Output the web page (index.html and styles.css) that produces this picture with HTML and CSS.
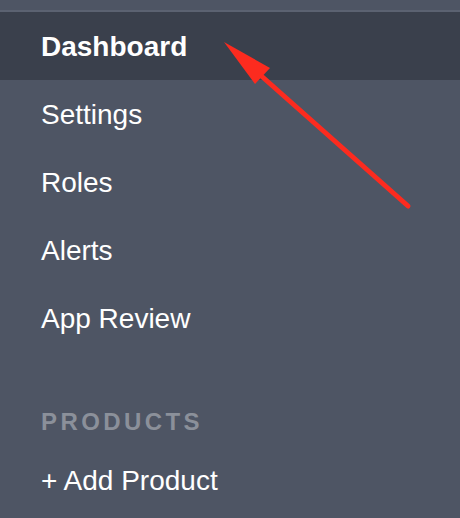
FILE: index.html
```html
<!DOCTYPE html>
<html>
<head>
<meta charset="utf-8">
<link rel="stylesheet" href="styles.css">
</head>
<body>
<nav class="sidebar">
  <div class="topbar"></div>
  <ul class="menu">
    <li class="item active">Dashboard</li>
    <li class="item">Settings</li>
    <li class="item">Roles</li>
    <li class="item">Alerts</li>
    <li class="item">App Review</li>
  </ul>
  <div class="section">PRODUCTS</div>
  <ul class="menu">
    <li class="item add">+ Add Product</li>
  </ul>
</nav>
<svg class="arrow" width="460" height="518" viewBox="0 0 460 518">
  <line x1="408" y1="206" x2="258" y2="73" stroke="#fc2b1f" stroke-width="5" stroke-linecap="round"/>
  <polygon points="224,42 270,68 255,84" fill="#fc2b1f"/>
</svg>
</body>
</html>
```
FILE: styles.css
```css
html, body {
  margin: 0;
  padding: 0;
  background: #4e5564;
  width: 460px;
  height: 518px;
  overflow: hidden;
}
body {
  position: relative;
  font-family: "Liberation Sans", Arial, Helvetica, sans-serif;
  color: #ffffff;
}
.topbar {
  height: 10px;
  border-bottom: 2px solid #5b6271;
}
.menu {
  list-style: none;
  margin: 0;
  padding: 0;
}
.item {
  box-sizing: border-box;
  height: 68px;
  padding-top: 1px;
  line-height: 67px;
  font-size: 28px;
  padding-left: 41px;
  white-space: nowrap;
}
.item.active {
  background: #3a404c;
  font-weight: bold;
}
.section {
  margin-top: 54px;
  height: 32px;
  line-height: 32px;
  padding-left: 41px;
  font-size: 24px;
  font-weight: bold;
  letter-spacing: 3.4px;
  color: #8b909a;
}
.item.add {
  margin-top: 8px;
}
.arrow {
  position: absolute;
  left: 0;
  top: 0;
  pointer-events: none;
}
```
